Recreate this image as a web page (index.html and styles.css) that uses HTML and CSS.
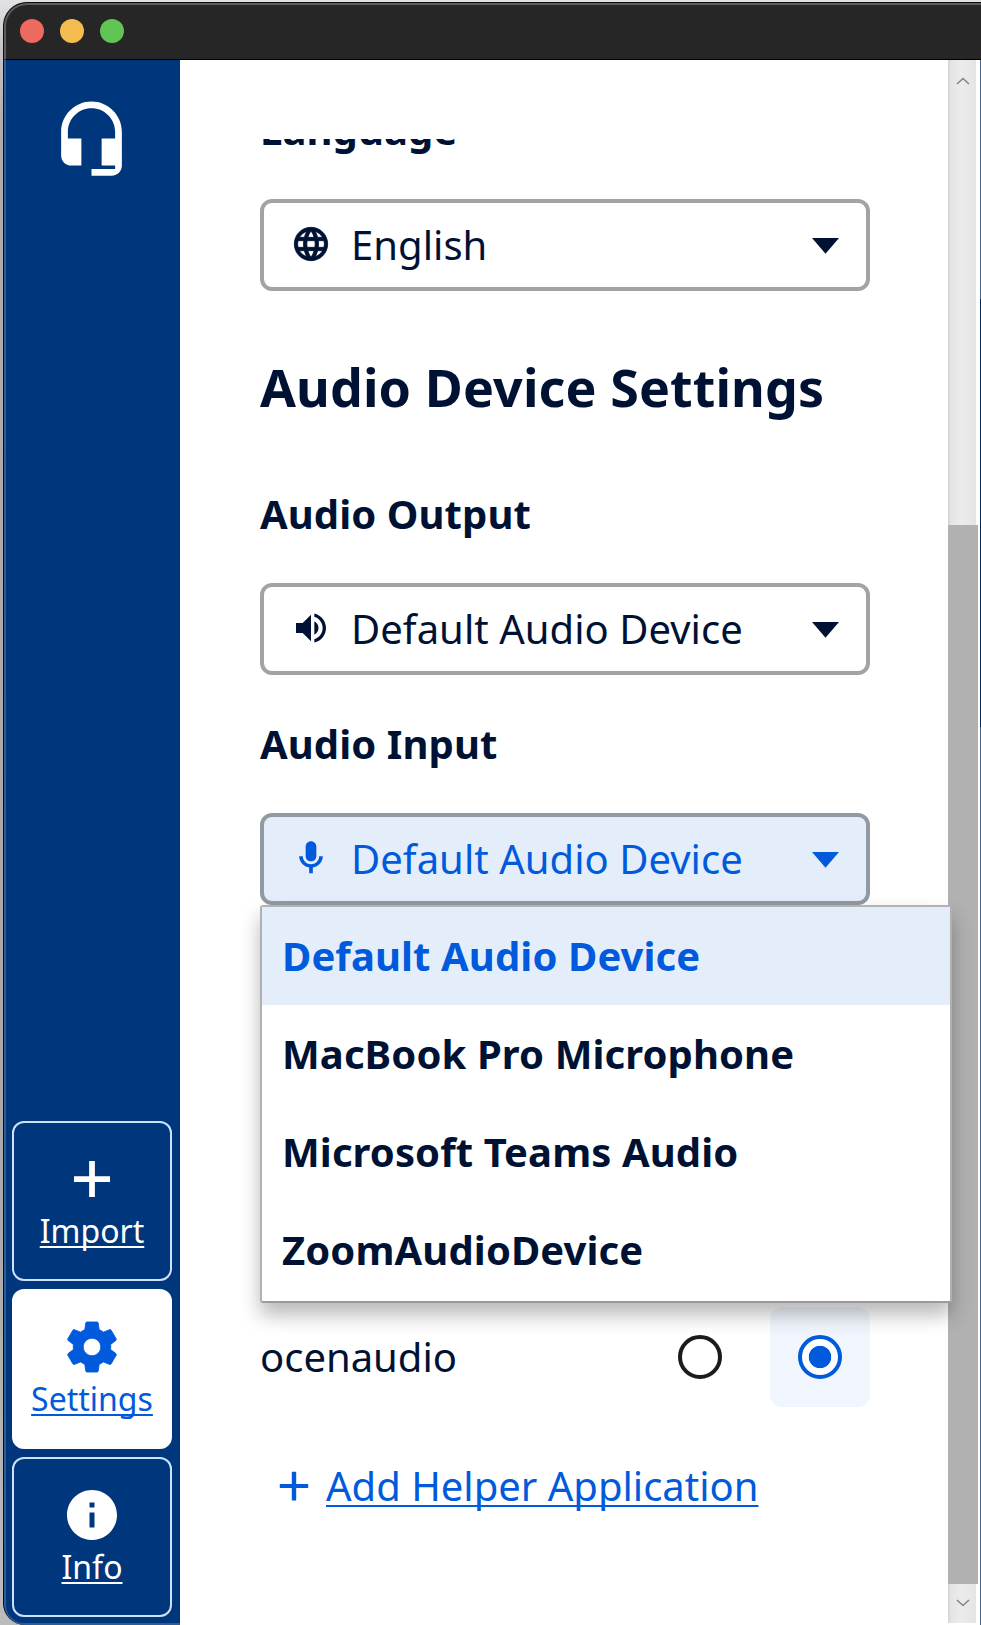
FILE: index.html
```html
<!DOCTYPE html>
<html lang="en">
<head>
<meta charset="utf-8">
<title>Settings</title>
<link rel="stylesheet" href="styles.css">
</head>
<body>
<div class="window">
  <header class="titlebar">
    <span class="light light-close"></span>
    <span class="light light-minimize"></span>
    <span class="light light-zoom"></span>
  </header>
  <div class="body">
    <nav class="sidebar">
      <svg class="logo" viewBox="0 0 24 24"><path d="M12 1c-4.97 0-9 4.03-9 9v7c0 1.66 1.34 3 3 3h3v-8H5v-2c0-3.87 3.13-7 7-7s7 3.13 7 7v2h-4v8h4v1h-7v2h6c1.66 0 3-1.34 3-3V10c0-4.97-4.03-9-9-9z"/></svg>
      <div class="nav-list">
        <a class="nav-item">
          <svg class="nav-icon" viewBox="0 0 24 24"><path d="M19.2 13.15h-6.05v6.05h-2.3v-6.05H4.8v-2.3h6.05V4.8h2.3v6.05h6.05z"/></svg>
          <span class="nav-label">Import</span>
        </a>
        <a class="nav-item nav-item-active">
          <svg class="nav-icon nav-icon-gear" viewBox="0 0 24 24"><path d="M19.43 12.98c.04-.32.07-.64.07-.98s-.03-.66-.07-.98l2.11-1.65c.19-.15.24-.42.12-.64l-2-3.46c-.12-.22-.39-.3-.61-.22l-2.49 1c-.52-.4-1.08-.73-1.69-.98l-.38-2.65C14.46 2.18 14.25 2 14 2h-4c-.25 0-.46.18-.49.42l-.38 2.65c-.61.25-1.17.59-1.69.98l-2.49-1c-.23-.09-.49 0-.61.22l-2 3.46c-.13.22-.07.49.12.64l2.11 1.65c-.04.32-.07.65-.07.98s.03.66.07.98l-2.11 1.65c-.19.15-.24.42-.12.64l2 3.46c.12.22.39.3.61.22l2.49-1c.52.4 1.08.73 1.69.98l.38 2.65c.03.24.24.42.49.42h4c.25 0 .46-.18.49-.42l.38-2.65c.61-.25 1.17-.59 1.69-.98l2.49 1c.23.09.49 0 .61-.22l2-3.46c.12-.22.07-.49-.12-.64l-2.11-1.65zM12 15.5c-1.93 0-3.5-1.57-3.5-3.5s1.57-3.5 3.5-3.5 3.5 1.57 3.5 3.5-1.57 3.5-3.5 3.5z"/></svg>
          <span class="nav-label">Settings</span>
        </a>
        <a class="nav-item">
          <svg class="nav-icon" viewBox="0 0 24 24"><path d="M12 2C6.48 2 2 6.48 2 12s4.48 10 10 10 10-4.48 10-10S17.520 2 12 2zm1 15h-2v-6h2v6zm0-8h-2V7h2v2z"/></svg>
          <span class="nav-label">Info</span>
        </a>
      </div>
    </nav>
    <main class="content">
      <div class="scroll-area">
        <h3 class="field-title language-title">Language</h3>
        <div class="select">
          <svg class="select-icon select-icon-globe" viewBox="0 0 24 24"><path d="M11.990 2C6.470 2 2 6.480 2 12s4.470 10 9.990 10C17.520 22 22 17.520 22 12S17.520 2 11.990 2zm6.930 6h-2.950c-.32-1.250-.78-2.450-1.380-3.560 1.840.63 3.370 1.910 4.330 3.560zM12 4.040c.83 1.200 1.480 2.530 1.910 3.960h-3.820c.43-1.430 1.080-2.760 1.910-3.960zM4.260 14C4.100 13.360 4 12.690 4 12s.1-1.360.26-2h3.380c-.08.66-.14 1.320-.14 2s.06 1.340.14 2H4.260zm.82 2h2.950c.32 1.250.78 2.450 1.380 3.560-1.840-.63-3.370-1.900-4.330-3.560zm2.950-8H5.080c.96-1.660 2.490-2.930 4.330-3.560C8.810 5.550 8.350 6.750 8.030 8zM12 19.960c-.83-1.200-1.480-2.530-1.910-3.960h3.820c-.43 1.430-1.080 2.760-1.910 3.960zM14.340 14H9.660c-.09-.66-.16-1.320-.16-2s.07-1.350.16-2h4.680c.09.65.16 1.320.16 2s-.07 1.340-.16 2zm.25 5.560c.6-1.110 1.060-2.310 1.380-3.560h2.950c-.96 1.650-2.490 2.930-4.330 3.560zM16.360 14c.08-.66.14-1.320.14-2s-.06-1.340-.14-2h3.380c.16.64.26 1.310.26 2s-.1 1.360-.26 2h-3.380z"/></svg>
          <span class="select-value">English</span>
          <svg class="select-arrow" viewBox="0 0 27 16"><path d="M0 0h27L13.500 15.700z"/></svg>
        </div>

        <h2 class="section-title">Audio Device Settings</h2>

        <h3 class="field-title">Audio Output</h3>
        <div class="select">
          <svg class="select-icon" viewBox="0 0 24 24"><path d="M3 9v6h4l5 5V4L7 9H3zm13.500 3c0-1.770-1.020-3.290-2.500-4.030v8.050c1.480-.73 2.500-2.250 2.500-4.020zM14 3.230v2.060c2.890.86 5 3.540 5 6.710s-2.110 5.850-5 6.710v2.060c4.010-.91 7-4.490 7-8.770s-2.990-7.860-7-8.770z"/></svg>
          <span class="select-value">Default Audio Device</span>
          <svg class="select-arrow" viewBox="0 0 27 16"><path d="M0 0h27L13.500 15.700z"/></svg>
        </div>

        <h3 class="field-title input-title">Audio Input</h3>
        <div class="select select-open">
          <svg class="select-icon" viewBox="0 0 24 24"><path d="M12 14c1.740 0 3.200-1.400 3.200-3.100V5.100C15.200 3.400 13.740 2 12 2S8.800 3.400 8.800 5.100v5.800C8.800 12.600 10.260 14 12 14zm4.900-3c0 2.800-2.300 4.800-4.900 4.800S7.100 13.800 7.100 11H4.900c0 3.410 2.720 6.230 6 6.720V21.200h2.200v-3.480c3.280-.48 6-3.300 6-6.720z"/></svg>
          <span class="select-value">Default Audio Device</span>
          <svg class="select-arrow" viewBox="0 0 27 16"><path d="M0 0h27L13.500 15.700z"/></svg>
          <ul class="menu">
            <li class="menu-item menu-item-selected">Default Audio Device</li>
            <li class="menu-item">MacBook Pro Microphone</li>
            <li class="menu-item">Microsoft Teams Audio</li>
            <li class="menu-item">ZoomAudioDevice</li>
          </ul>
        </div>

        <div class="helper-row">
          <span class="helper-name">ocenaudio</span>
          <span class="radio-cell"><span class="radio"></span></span>
          <span class="radio-cell radio-cell-on"><span class="radio radio-on"></span></span>
        </div>
        <a class="add-helper">
          <svg class="add-icon" viewBox="0 0 24 24"><path d="M19.100 13h-6v6.200h-2.200V13h-6v-2h6V4.900h2.200V11h6z"/></svg>
          <span class="add-label">Add Helper Application</span>
        </a>
      </div>
    </main>
    <aside class="scrollbar">
      <svg class="chevron" viewBox="0 0 14 8"><path d="M1 7l6-5.500L13 7"/></svg>
      <div class="thumb"></div>
      <svg class="chevron chevron-down" viewBox="0 0 14 8"><path d="M1 1l6 5.500L13 1"/></svg>
    </aside>
    <div class="edge"></div>
  </div>
</div>
</body>
</html>
```
FILE: styles.css
```css
* { box-sizing: border-box; }

body {
  margin: 0;
  padding: 2px 0 0 3px;
  height: 1625px;
  overflow: hidden;
  background: linear-gradient(#e2e2e2 0, #c4c4c4 50px, #adadad 130px, #a9a9a9 1200px, #bcbcbc 1625px);
  font-family: "Noto Sans", sans-serif;
  font-size: 40px;
  line-height: 56px;
  color: #001233;
}

.window {
  height: 1623px;
  border: 1px solid #0c0c0c;
  border-width: 1px 0 0 1px;
  border-radius: 24px 0 0 22px;
  overflow: hidden;
  background: #00367b;
}

.titlebar {
  display: flex;
  align-items: center;
  gap: 16px;
  height: 57px;
  padding: 0 0 2px 14px;
  background: #262626;
  border: 2px solid #5d5d5d;
  border-width: 2px 0 0 2px;
  border-radius: 23px 0 0 0;
  border-bottom: 1px solid #000;
}

.light { width: 24px; height: 24px; border-radius: 50%; }
.light-close { background: #ee6a5f; }
.light-minimize { background: #f5bd4f; }
.light-zoom { background: #61c554; }

.body { display: flex; height: 1565px; }

.sidebar {
  display: flex;
  flex-direction: column;
  align-items: center;
  justify-content: space-between;
  width: 176px;
  padding: 38px 0 6px;
  border: 2px solid #315b93;
  border-width: 0 0 2px 2px;
  border-radius: 0 0 0 20px;
  background: #00367b;
}

.logo { width: 81px; height: 81px; fill: #fff; margin-right: 4px; }

.nav-list { display: flex; flex-direction: column; gap: 8px; margin-right: 2px; }

.nav-item {
  display: flex;
  flex-direction: column;
  align-items: center;
  width: 160px;
  height: 160px;
  padding-top: 26px;
  border: 2px solid #cfe2fb;
  border-radius: 12px;
  color: #fff;
}

.nav-item-active { background: #fff; border-color: #fff; color: #005adb; }
.nav-icon { width: 60px; height: 60px; fill: currentColor; }
.nav-icon-gear { stroke: currentColor; stroke-width: .35; }

.nav-label {
  font-size: 32px;
  line-height: 44px;
  text-decoration: underline 2px;
  text-underline-offset: 3px;
  text-decoration-skip-ink: none;
}

.content {
  position: relative;
  z-index: 1;
  width: 768px;
  padding-top: 79px;
  background: #fff;
}

/* Clips scrolled content at the top while letting the menu extend past the right edge. */
.scroll-area { height: 1486px; padding: 1px 78px 0 80px; clip-path: inset(0 -40px 0 0); }

.field-title { margin: 0; font-size: 40px; font-weight: 700; line-height: 56px; letter-spacing: .08px; }
.language-title { margin: -38px 0 41px; }
.section-title { margin: 60px 0 63px; font-size: 52px; font-weight: 700; line-height: 72px; letter-spacing: .1px; }

.select {
  position: relative;
  display: flex;
  align-items: center;
  width: 610px;
  height: 92px;
  padding: 0 27px;
  border: 4px solid #a3a3a3;
  border-radius: 12px;
}

.select-open { background: #e4eefb; border-color: #9199a1; color: #005adb; }
.select-icon { width: 40px; height: 40px; margin: 0 20px 2px 0; fill: currentColor; }
.select-icon-globe { stroke: currentColor; stroke-width: .5; }
.select-value { flex: 1; letter-spacing: .04px; }
.select-arrow { width: 27px; height: 16px; margin-top: 2px; fill: currentColor; }
.field-title + .select { margin-top: 41px; }
.input-title { margin-top: 41px; }

.menu {
  position: absolute;
  z-index: 2;
  top: 88px;
  left: -4px;
  width: 692px;
  height: 398px;
  margin: 0;
  padding: 0;
  list-style: none;
  border: 2px solid #9a9a9a;
  border-top-color: #b3b3b3;
  border-left-color: #b0b0b0;
  border-right-color: #b0b0b0;
  border-radius: 3px;
  background: #fff;
  box-shadow: 0 12px 20px rgba(0, 0, 0, .28);
}

.menu-item {
  height: 98px;
  padding: 0 20px;
  font-weight: 700;
  line-height: 98px;
  letter-spacing: .1px;
  color: #001233;
}

.menu-item-selected { background: #e4eefb; color: #005adb; }

.helper-row { display: flex; align-items: center; gap: 20px; height: 100px; margin-top: 402px; }
.helper-name { flex: 1; }
.radio-cell { display: flex; align-items: center; justify-content: center; width: 100px; height: 100px; border-radius: 12px; }
.radio-cell-on { background: #f1f6fe; }
.radio { width: 44px; height: 44px; border: 4px solid #1b1b1b; border-radius: 50%; background: #fff; }
.radio-on { border-color: #005adb; background: radial-gradient(circle, #005adb 10.8px, #fff 11.6px); }

.add-helper { display: flex; align-items: center; gap: 8px; margin: 51px 0 0 10px; color: #005adb; }
.add-icon { width: 48px; height: 48px; fill: currentColor; }
.add-label { text-decoration: underline 2px; text-underline-offset: 4px; text-decoration-skip-ink: none; }

.scrollbar {
  display: flex;
  flex-direction: column;
  align-items: center;
  width: 30px;
  height: 1565px;
  border-bottom: 2px solid #fff;
  background: linear-gradient(90deg, #d8d8d8 0 2px, #e4e4e4 2px, #ececec 14px, #e4e4e4 28px, #fff 28px);
}

.thumb { width: 30px; height: 1059px; margin-top: 440px; background: #b1b1b1; }
.chevron { width: 14px; height: 8px; margin-top: 17px; fill: none; stroke: #858585; stroke-width: 1.600; }
.chevron-down { margin-top: 15px; }

.edge {
  width: 3px;
  border-left: 2px solid #fff;
  background: linear-gradient(#47638a 0 239px, #002a66 239px 667px, #47638a 667px);
}
```
